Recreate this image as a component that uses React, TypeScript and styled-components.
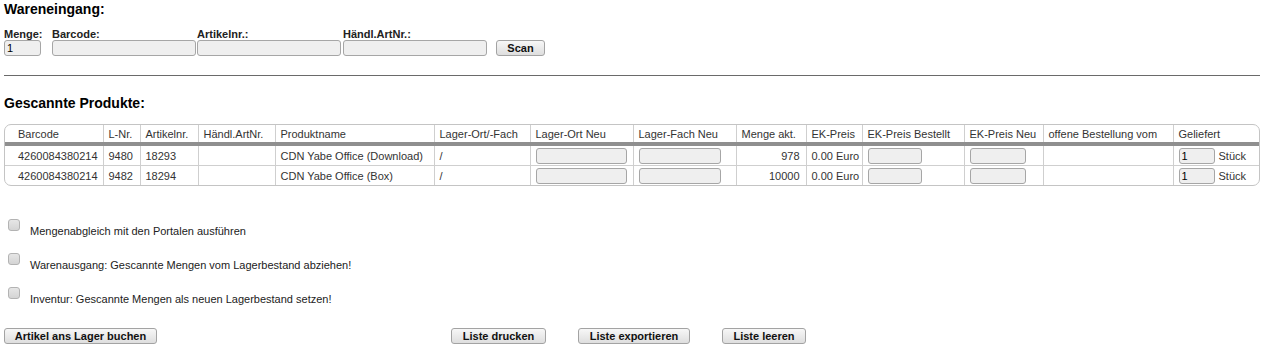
import React from "react";
import styled, { createGlobalStyle } from "styled-components";

const GlobalStyle = createGlobalStyle`
  body {
    margin: 0;
    background: #fff;
    font-family: "Liberation Sans", Arial, sans-serif;
    font-size: 11px;
    color: #000;
  }
`;

const Page = styled.div`
  padding: 0 5px 0 4px;
  width: 1256px;
`;

const Title = styled.div`
  font-size: 14px;
  font-weight: bold;
  line-height: 16px;
  margin-top: 1px;
`;

const ScanRow = styled.div`
  display: flex;
  align-items: flex-end;
  margin-top: 11px;
`;

const Field = styled.div<{ $w: number }>`
  display: flex;
  flex-direction: column;
  width: ${(p) => p.$w}px;
  flex: none;
`;

const FieldLabel = styled.span`
  font-weight: bold;
  line-height: 12px;
  height: 12px;
  color: #222;
  white-space: nowrap;
`;

const TextInput = styled.input<{ $w: number }>`
  box-sizing: border-box;
  width: ${(p) => p.$w}px;
  height: 16px;
  padding: 0 2px;
  border: 1px solid #a6a6a6;
  border-radius: 3px;
  background: #efefef;
  font-family: "Liberation Sans", Arial, sans-serif;
  font-size: 11px;
  color: #000;
  outline: none;
`;

const Button = styled.button<{ $w: number }>`
  box-sizing: border-box;
  width: ${(p) => p.$w}px;
  height: 16px;
  padding: 0;
  border: 1px solid #a3a3a3;
  border-radius: 3px;
  background: linear-gradient(#f7f7f7, #dedede);
  font-family: "Liberation Sans", Arial, sans-serif;
  font-size: 11px;
  font-weight: bold;
  color: #111;
  line-height: 14px;
`;

const Rule = styled.hr`
  margin: 19px 0 0;
  border: none;
  border-top: 1px solid #6a6a6a;
  width: 1256px;
`;

const SubTitle = styled(Title)`
  margin-top: 19px;
`;

const TableBox = styled.div`
  margin-top: 13px;
  border: 1px solid #c4c4c4;
  border-radius: 7px;
  overflow: hidden;
  width: 1254px;
`;

const Table = styled.table`
  border-collapse: collapse;
  table-layout: fixed;
  width: 100%;
  color: #333;
`;

const Th = styled.th<{ $first?: boolean }>`
  font-weight: normal;
  text-align: left;
  height: 17px;
  padding: 0 0 0 ${(p) => (p.$first ? 13 : 5)}px;
  border-left: ${(p) => (p.$first ? "none" : "1px solid #cfcfcf")};
  border-bottom: 4px solid #8f8f8f;
  white-space: nowrap;
  overflow: hidden;
`;

const Td = styled.td<{ $first?: boolean; $right?: boolean }>`
  height: 19px;
  padding: 0 ${(p) => (p.$right ? 6 : 0)}px 0 ${(p) => (p.$first ? 13 : 5)}px;
  text-align: ${(p) => (p.$right ? "right" : "left")};
  border-left: ${(p) => (p.$first ? "none" : "1px solid #cfcfcf")};
  border-top: 1px solid #cfcfcf;
  white-space: nowrap;
  overflow: hidden;
`;

const Row = styled.tr`
  &:first-child td {
    border-top: none;
  }
`;

const Qty = styled.div`
  display: flex;
  align-items: center;
  gap: 4px;
`;

const Options = styled.div`
  margin-top: 33px;
  display: flex;
  flex-direction: column;
`;

const Option = styled.label`
  display: flex;
  align-items: flex-start;
  height: 34px;
  padding-left: 4px;
`;

const Check = styled.input`
  appearance: none;
  margin: 0;
  width: 12px;
  height: 12px;
  border: 1px solid #b3b3b3;
  border-radius: 3px;
  background: linear-gradient(#e6e6e6, #d4d4d4);
`;

const OptionText = styled.span`
  margin: 6px 0 0 10px;
  color: #222;
  line-height: 12px;
`;

const Actions = styled.div`
  display: flex;
  margin-top: 7px;
`;

const ListActions = styled.div`
  display: flex;
  gap: 32px;
  margin-left: 294px;
`;

const columns: [string, number][] = [
  ["Barcode", 98],
  ["L-Nr.", 37],
  ["Artikelnr.", 58],
  ["Händl.ArtNr.", 77],
  ["Produktname", 159],
  ["Lager-Ort/-Fach", 96],
  ["Lager-Ort Neu", 103],
  ["Lager-Fach Neu", 103],
  ["Menge akt.", 70],
  ["EK-Preis", 56],
  ["EK-Preis Bestellt", 102],
  ["EK-Preis Neu", 79],
  ["offene Bestellung vom", 130],
  ["Geliefert", 86],
];

const products = [
  { barcode: "4260084380214", lnr: "9480", art: "18293", name: "CDN Yabe Office (Download)", qty: "978" },
  { barcode: "4260084380214", lnr: "9482", art: "18294", name: "CDN Yabe Office (Box)", qty: "10000" },
];

const options = [
  "Mengenabgleich mit den Portalen ausführen",
  "Warenausgang: Gescannte Mengen vom Lagerbestand abziehen!",
  "Inventur: Gescannte Mengen als neuen Lagerbestand setzen!",
];

export default function App() {
  return (
    <Page>
      <GlobalStyle />
      <Title>Wareneingang:</Title>
      <ScanRow>
        <Field $w={48}>
          <FieldLabel>Menge:</FieldLabel>
          <TextInput $w={37} defaultValue="1" />
        </Field>
        <Field $w={145}>
          <FieldLabel>Barcode:</FieldLabel>
          <TextInput $w={144} />
        </Field>
        <Field $w={146}>
          <FieldLabel>Artikelnr.:</FieldLabel>
          <TextInput $w={144} />
        </Field>
        <Field $w={153}>
          <FieldLabel>Händl.ArtNr.:</FieldLabel>
          <TextInput $w={144} />
        </Field>
        <Button $w={49}>Scan</Button>
      </ScanRow>
      <Rule />
      <SubTitle>Gescannte Produkte:</SubTitle>
      <TableBox>
        <Table>
          <colgroup>
            {columns.map(([name, w]) => (
              <col key={name} style={{ width: w }} />
            ))}
          </colgroup>
          <thead>
            <tr>
              {columns.map(([name], i) => (
                <Th key={name} $first={i === 0}>
                  {name}
                </Th>
              ))}
            </tr>
          </thead>
          <tbody>
            {products.map((p) => (
              <Row key={p.lnr}>
                <Td $first>{p.barcode}</Td>
                <Td>{p.lnr}</Td>
                <Td>{p.art}</Td>
                <Td />
                <Td>{p.name}</Td>
                <Td>/</Td>
                <Td>
                  <TextInput $w={91} />
                </Td>
                <Td>
                  <TextInput $w={82} />
                </Td>
                <Td $right>{p.qty}</Td>
                <Td>0.00 Euro</Td>
                <Td>
                  <TextInput $w={54} />
                </Td>
                <Td>
                  <TextInput $w={56} />
                </Td>
                <Td />
                <Td>
                  <Qty>
                    <TextInput $w={36} defaultValue="1" />
                    Stück
                  </Qty>
                </Td>
              </Row>
            ))}
          </tbody>
        </Table>
      </TableBox>
      <Options>
        {options.map((o) => (
          <Option key={o}>
            <Check type="checkbox" />
            <OptionText>{o}</OptionText>
          </Option>
        ))}
      </Options>
      <Actions>
        <Button $w={153}>Artikel ans Lager buchen</Button>
        <ListActions>
          <Button $w={95}>Liste drucken</Button>
          <Button $w={112}>Liste exportieren</Button>
          <Button $w={84}>Liste leeren</Button>
        </ListActions>
      </Actions>
    </Page>
  );
}
